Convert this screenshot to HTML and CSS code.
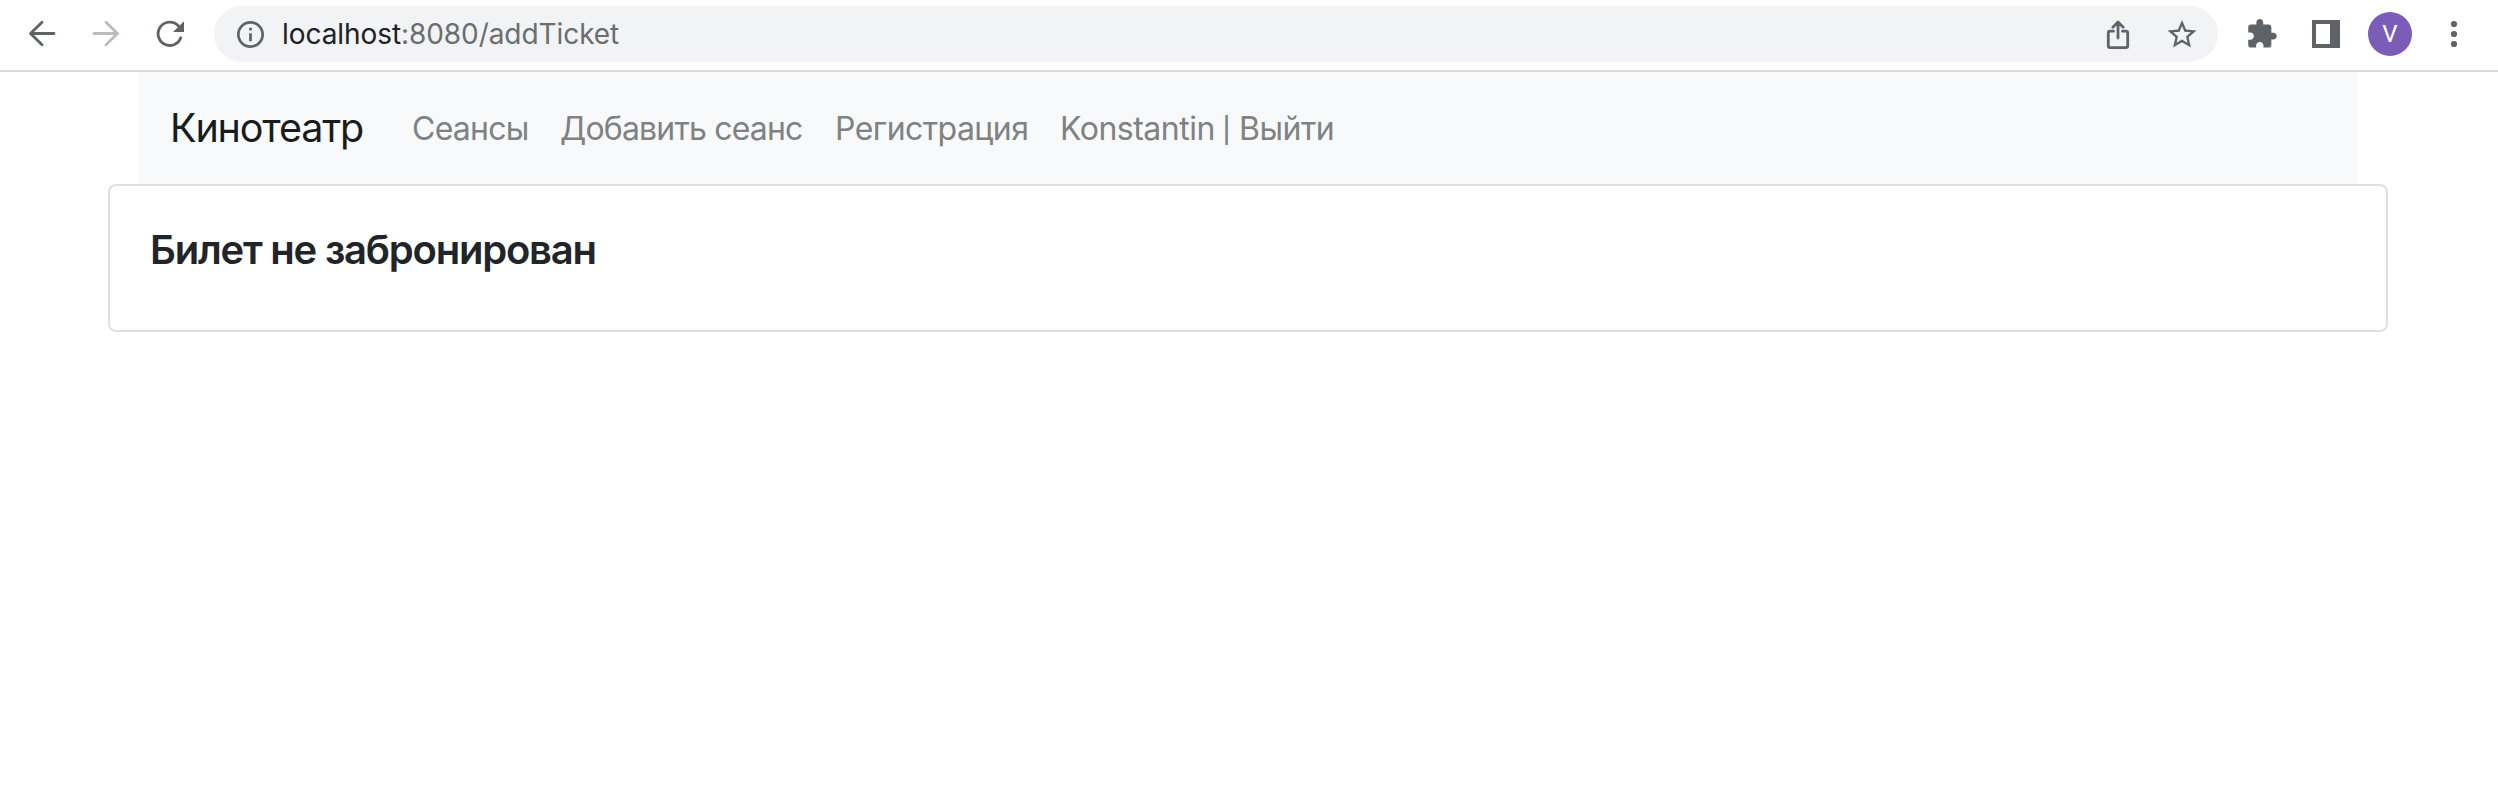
FILE: index.html
```
<!DOCTYPE html>
<html lang="ru">
<head>
<meta charset="utf-8">
<title>Кинотеатр</title>
<link rel="stylesheet" href="styles.css">
</head>
<body>
<header class="toolbar">
  <div class="btn"><svg class="icon line" viewBox="0 0 48 48"><path d="M36 23.5H13M24 12.2L12.5 23.5L24 34.8"/></svg></div>
  <div class="btn"><svg class="icon line disabled" viewBox="0 0 48 48"><path d="M12 23.5H35M24 12.2L35.5 23.5L24 34.8"/></svg></div>
  <div class="btn"><svg class="icon line" viewBox="0 0 48 48"><path d="M34.8 27.8A11.7 11.7 0 1 1 32.3 15.7"/><path class="solid" d="M38 11.2V22H27z"/></svg></div>
  <div class="address">
    <svg class="icon" viewBox="0 0 48 48"><g transform="translate(8.3 8.3) scale(1.35)"><path d="M11 7h2v2h-2zm0 4h2v6h-2zm1-9C6.48 2 2 6.48 2 12s4.48 10 10 10 10-4.48 10-10S17.52 2 12 2zm0 18c-4.41 0-8-3.59-8-8s3.59-8 8-8 8 3.59 8 8-3.59 8-8 8z"/></g></svg>
    <div class="url"><span class="host">localhost</span><span class="path">:8080/addTicket</span></div>
    <div class="btn"><svg class="icon line" viewBox="0 0 48 48"><path d="M19.5 21.2H16Q14.3 21.2 14.3 23V35.7Q14.3 37.6 16.2 37.6H31.8Q33.7 37.6 33.7 35.7V23Q33.7 21.2 32 21.2H28.5M24 28V12.5M18.8 17.2L24 12L29.2 17.2"/></svg></div>
    <div class="btn"><svg class="icon" viewBox="0 0 48 48"><path transform="translate(6.6 7.1) scale(1.45)" d="M22 9.24l-7.19-.62L12 2 9.19 8.63 2 9.24l5.46 4.73L5.82 21 12 17.27 18.18 21l-1.63-7.03L22 9.24zM12 15.4l-3.76 2.27 1-4.28-3.32-2.88 4.38-.38L12 6.1l1.71 4.04 4.38.38-3.32 2.88 1 4.28L12 15.4z"/></svg></div>
  </div>
  <div class="btn"><svg class="icon" viewBox="0 0 48 48"><path transform="translate(7.5 7.7) scale(1.36)" d="M20.5 11H19V7c0-1.1-.9-2-2-2h-4V3.5C13 2.12 11.88 1 10.5 1S8 2.12 8 3.5V5H4c-1.1 0-1.99.9-1.99 2v3.8H3.5c1.49 0 2.7 1.21 2.7 2.7s-1.21 2.7-2.7 2.7H2V20c0 1.1.9 2 2 2h3.8v-1.5c0-1.49 1.21-2.7 2.7-2.7 1.49 0 2.7 1.21 2.7 2.7V22H17c1.1 0 2-.9 2-2v-4h1.5c1.38 0 2.5-1.12 2.5-2.5S21.88 11 20.5 11z"/></svg></div>
  <div class="btn"><svg class="icon" viewBox="0 0 48 48"><path fill-rule="evenodd" d="M10 10H38V38H10zM14 14V34H28V14z"/></svg></div>
  <div class="btn"><div class="avatar">V</div></div>
  <div class="btn"><svg class="icon" viewBox="0 0 48 48"><circle cx="24" cy="14" r="3.1"/><circle cx="24" cy="24" r="3.1"/><circle cx="24" cy="34" r="3.1"/></svg></div>
</header>
<main class="container">
  <nav class="navbar">
    <a class="brand">Кинотеатр</a>
    <a class="link seances">Сеансы</a>
    <a class="link add">Добавить сеанс</a>
    <a class="link register">Регистрация</a>
    <a class="link user">Konstantin <span class="bar">|</span> Выйти</a>
  </nav>
  <section class="card"><h5 class="title">Билет не забронирован</h5></section>
</main>
</body>
</html>
```
FILE: styles.css
```
* { box-sizing: border-box; }
body { margin: 0; background: #fff; font-family: Inter, "Liberation Sans", sans-serif; }
.toolbar { display: flex; height: 72px; padding: 0 12px 2px 10px; border-bottom: 2px solid #dadcdc; }
.btn { display: flex; flex: none; width: 64px; height: 68px; align-items: center; justify-content: center; }
.icon { flex: none; width: 48px; height: 48px; fill: #5f6368; }
.line { fill: none; stroke: #5f6368; stroke-width: 2.8; stroke-linecap: round; stroke-linejoin: round; }
.disabled { stroke: #babcbe; }
.solid { fill: #5f6368; stroke: none; }
.address { display: flex; flex: 1; align-items: center; height: 56px; margin: 6px 12px 0; padding: 0 4px 0 12px; border-radius: 28px; background: #f1f3f4; }
.url { flex: 1; margin-left: 8px; font-size: 28px; line-height: 56px; white-space: nowrap; }
.host { color: #202124; letter-spacing: -0.07px; }
.path { color: #6b6d6f; letter-spacing: -0.07px; }
.avatar { width: 44px; height: 44px; border-radius: 50%; background: #7a5cb9; color: #fff; font: 400 24px/45px Roboto, sans-serif; text-align: center; }
.container { width: 2280px; margin: 0 0 0 108px; padding: 0; }
.navbar { display: flex; align-items: center; height: 112px; margin: 0 30px; padding: 0 32px; background: #f8f9fb; white-space: nowrap; }
.brand { width: 242px; font-size: 39.5px; color: #1a1b1b; letter-spacing: -1.15px; }
.link { font-size: 32px; color: #808182; letter-spacing: -0.75px; }
.seances { width: 148px; }
.add { width: 275px; letter-spacing: -0.82px; }
.register { width: 225px; letter-spacing: -0.57px; }
.user { letter-spacing: -0.5px; }
.bar { font-size: 25px; font-weight: 500; margin: 0 0 0 -1px; position: relative; top: -1px; }
.card { height: 148px; padding: 36px 40px; border: 2px solid #dedfdf; border-radius: 8px; background: #fff; }
.title { margin: 0; font-size: 40px; line-height: 56px; font-weight: 600; color: #212529; letter-spacing: -1.22px; }
```
